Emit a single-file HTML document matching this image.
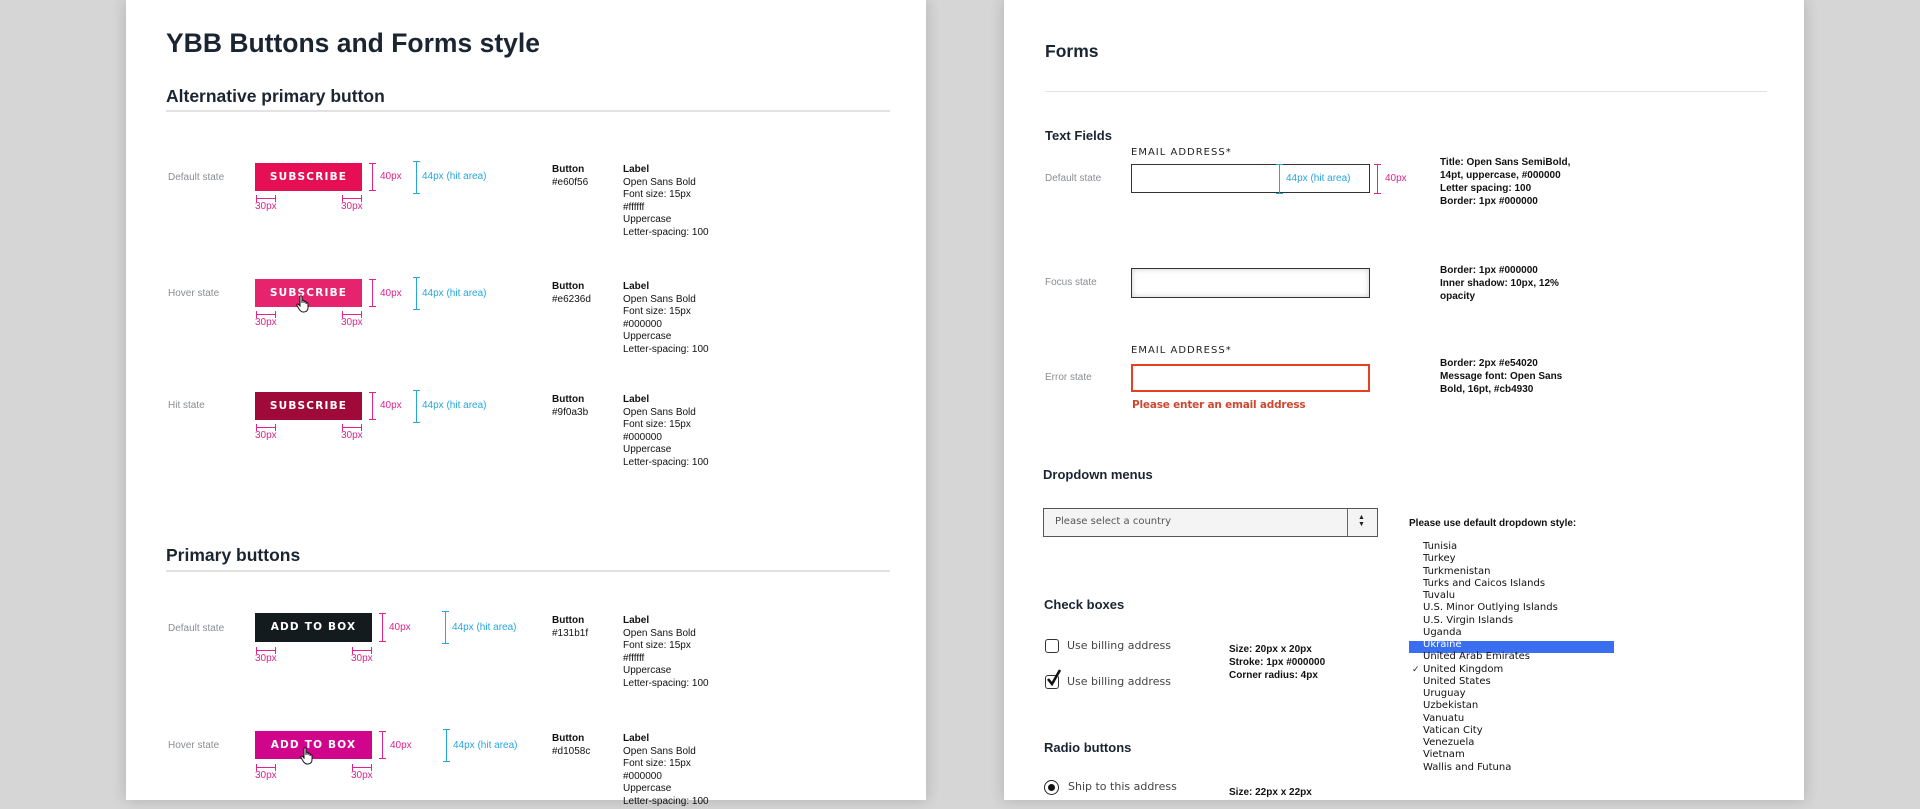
<!DOCTYPE html>
<html><head><meta charset="utf-8"><style>
*{margin:0;padding:0;box-sizing:border-box}
body{width:1920px;height:800px;background:#d6d6d6;position:relative;overflow:hidden;font-family:"Liberation Sans",Arial,sans-serif;color:#1a2530}
.page{position:absolute;top:0;height:800px;background:#fff;box-shadow:0 0 14px rgba(0,0,0,.18)}
.a{position:absolute;white-space:nowrap}
.h1{font-size:26.5px;font-weight:bold;color:#1b2532}
.h2{font-size:17.5px;font-weight:bold;color:#1b2532}
.h3{font-size:13px;font-weight:bold;color:#1b2532}
.hr{position:absolute;height:2px;background:#e2e2e4}
.st{font-size:10px;color:#8a8d92}
.btn{position:absolute;color:#fff;font-weight:bold;font-size:10.5px;letter-spacing:1.2px;text-align:center;font-family:"DejaVu Sans","Liberation Sans",sans-serif}
.pk{color:#e0248a;font-size:10px}
.bl{color:#27a6dd;font-size:10px}
.vp{position:absolute;width:1px;background:#e0248a}
.vp:before,.vp:after{content:"";position:absolute;left:-3px;width:7px;height:1px;background:#e0248a}
.vp:before{top:0}.vp:after{bottom:0}
.vb{position:absolute;width:1px;background:#27a6dd}
.vb:before,.vb:after{content:"";position:absolute;left:-3px;width:7px;height:1px;background:#27a6dd}
.vb:before{top:0}.vb:after{bottom:0}
.hp{position:absolute;height:1px;width:20px;background:#e0248a}
.hp:before,.hp:after{content:"";position:absolute;top:-3px;width:1px;height:7px;background:#e0248a}
.hp:before{left:0}.hp:after{right:0}
.sm{font-size:10px;line-height:12.6px;color:#111}
.nt{font-size:10px;line-height:13px;color:#111;font-weight:bold}
.fld{position:absolute;border:1px solid #333;background:#fff}
.lab{font-size:10px;letter-spacing:1px;color:#222;font-family:"DejaVu Sans","Liberation Sans",sans-serif}
.li{position:absolute;left:1423px;font-size:10px;color:#111;font-family:"DejaVu Sans","Liberation Sans",sans-serif}
.opt{font-size:11px;color:#444;font-family:"DejaVu Sans","Liberation Sans",sans-serif}
</style></head><body>
<div class="page" style="left:126px;width:800px"></div>
<div class="page" style="left:1004px;width:800px"></div>

<div class="a h1" style="left:166px;top:28px">YBB Buttons and Forms style</div>
<div class="a h2" style="left:166px;top:86px">Alternative primary button</div>
<div class="hr" style="left:166px;top:110px;width:724px"></div>

<div class="a st" style="left:168px;top:172px">Default state</div>
<div class="btn" style="left:255px;top:163px;width:107px;height:28px;line-height:28px;background:#e60f56">SUBSCRIBE</div>
<div class="vp" style="left:372px;top:163px;height:28px"></div><div class="a pk" style="left:380px;top:171px">40px</div>
<div class="vb" style="left:416px;top:161px;height:33px"></div><div class="a bl" style="left:422px;top:171px">44px (hit area)</div>
<div class="hp" style="left:256px;top:198px"></div><div class="hp" style="left:342px;top:198px"></div>
<div class="a pk" style="left:255px;top:201px">30px</div><div class="a pk" style="left:341px;top:201px">30px</div>
<div class="a sm" style="left:552px;top:164px"><b>Button</b><br>#e60f56</div>
<div class="a sm" style="left:623px;top:164px"><b>Label</b><br>Open Sans Bold<br>Font size: 15px<br>#ffffff<br>Uppercase<br>Letter-spacing: 100</div>

<div class="a st" style="left:168px;top:288px">Hover state</div>
<div class="btn" style="left:255px;top:279px;width:107px;height:28px;line-height:28px;background:#e6236d">SUBSCRIBE</div>
<svg class="a" style="left:296px;top:295px" width="14" height="18" viewBox="0 0 14 18"><path d="M4 1.5c0-1 2-1 2 0V8V6c0-1 2-1 2 0v2-1c0-1 2-1 2 0v2-.5c0-1 2-1 2 0V13c0 2-1.5 4-4 4H7c-2 0-3-1.5-4-3L1 10.5c-.6-1 .8-2 1.6-1L4 11z" fill="#fff" stroke="#111" stroke-width="1"/></svg>
<div class="vp" style="left:372px;top:279px;height:28px"></div><div class="a pk" style="left:380px;top:288px">40px</div>
<div class="vb" style="left:416px;top:277px;height:33px"></div><div class="a bl" style="left:422px;top:288px">44px (hit area)</div>
<div class="hp" style="left:256px;top:314px"></div><div class="hp" style="left:342px;top:314px"></div>
<div class="a pk" style="left:255px;top:317px">30px</div><div class="a pk" style="left:341px;top:317px">30px</div>
<div class="a sm" style="left:552px;top:281px"><b>Button</b><br>#e6236d</div>
<div class="a sm" style="left:623px;top:281px"><b>Label</b><br>Open Sans Bold<br>Font size: 15px<br>#000000<br>Uppercase<br>Letter-spacing: 100</div>

<div class="a st" style="left:168px;top:400px">Hit state</div>
<div class="btn" style="left:255px;top:392px;width:107px;height:28px;line-height:28px;background:#9f0a3b">SUBSCRIBE</div>
<div class="vp" style="left:372px;top:392px;height:28px"></div><div class="a pk" style="left:380px;top:400px">40px</div>
<div class="vb" style="left:416px;top:390px;height:33px"></div><div class="a bl" style="left:422px;top:400px">44px (hit area)</div>
<div class="hp" style="left:256px;top:427px"></div><div class="hp" style="left:342px;top:427px"></div>
<div class="a pk" style="left:255px;top:430px">30px</div><div class="a pk" style="left:341px;top:430px">30px</div>
<div class="a sm" style="left:552px;top:394px"><b>Button</b><br>#9f0a3b</div>
<div class="a sm" style="left:623px;top:394px"><b>Label</b><br>Open Sans Bold<br>Font size: 15px<br>#000000<br>Uppercase<br>Letter-spacing: 100</div>

<div class="a h2" style="left:166px;top:545px">Primary buttons</div>
<div class="hr" style="left:166px;top:570px;width:724px"></div>

<div class="a st" style="left:168px;top:623px">Default state</div>
<div class="btn" style="left:255px;top:613px;width:117px;height:29px;line-height:29px;background:#131b1f">ADD TO BOX</div>
<div class="vp" style="left:382px;top:613px;height:29px"></div><div class="a pk" style="left:389px;top:622px">40px</div>
<div class="vb" style="left:445px;top:611px;height:33px"></div><div class="a bl" style="left:452px;top:622px">44px (hit area)</div>
<div class="hp" style="left:256px;top:650px"></div><div class="hp" style="left:352px;top:650px"></div>
<div class="a pk" style="left:255px;top:653px">30px</div><div class="a pk" style="left:351px;top:653px">30px</div>
<div class="a sm" style="left:552px;top:615px"><b>Button</b><br>#131b1f</div>
<div class="a sm" style="left:623px;top:615px"><b>Label</b><br>Open Sans Bold<br>Font size: 15px<br>#ffffff<br>Uppercase<br>Letter-spacing: 100</div>

<div class="a st" style="left:168px;top:740px">Hover state</div>
<div class="btn" style="left:255px;top:731px;width:117px;height:28px;line-height:28px;background:#d1058c">ADD TO BOX</div>
<svg class="a" style="left:300px;top:747px" width="14" height="18" viewBox="0 0 14 18"><path d="M4 1.5c0-1 2-1 2 0V8V6c0-1 2-1 2 0v2-1c0-1 2-1 2 0v2-.5c0-1 2-1 2 0V13c0 2-1.5 4-4 4H7c-2 0-3-1.5-4-3L1 10.5c-.6-1 .8-2 1.6-1L4 11z" fill="#fff" stroke="#111" stroke-width="1"/></svg>
<div class="vp" style="left:382px;top:731px;height:28px"></div><div class="a pk" style="left:390px;top:740px">40px</div>
<div class="vb" style="left:446px;top:729px;height:33px"></div><div class="a bl" style="left:453px;top:740px">44px (hit area)</div>
<div class="hp" style="left:256px;top:767px"></div><div class="hp" style="left:352px;top:767px"></div>
<div class="a pk" style="left:255px;top:770px">30px</div><div class="a pk" style="left:351px;top:770px">30px</div>
<div class="a sm" style="left:552px;top:733px"><b>Button</b><br>#d1058c</div>
<div class="a sm" style="left:623px;top:733px"><b>Label</b><br>Open Sans Bold<br>Font size: 15px<br>#000000<br>Uppercase<br>Letter-spacing: 100</div>

<!-- right page -->
<div class="a h2" style="left:1045px;top:41px">Forms</div>
<div class="hr" style="left:1045px;top:91px;width:722px;height:1px"></div>
<div class="a h3" style="left:1045px;top:128px">Text Fields</div>

<div class="a lab" style="left:1131px;top:147px">EMAIL ADDRESS*</div>
<div class="a st" style="left:1045px;top:173px">Default state</div>
<div class="fld" style="left:1131px;top:164px;width:239px;height:29px"></div>
<div class="vb" style="left:1279px;top:164px;height:30px"></div><div class="a bl" style="left:1286px;top:173px">44px (hit area)</div>
<div class="vp" style="left:1377px;top:164px;height:30px"></div><div class="a pk" style="left:1385px;top:173px">40px</div>
<div class="a nt" style="left:1440px;top:156px">Title: Open Sans SemiBold,<br>14pt, uppercase, #000000<br>Letter spacing: 100<br>Border: 1px #000000</div>

<div class="a st" style="left:1045px;top:277px">Focus state</div>
<div class="fld" style="left:1131px;top:268px;width:239px;height:30px;box-shadow:inset 0 0 6px rgba(0,0,0,.2)"></div>
<div class="a nt" style="left:1440px;top:264px">Border: 1px #000000<br>Inner shadow: 10px, 12%<br>opacity</div>

<div class="a lab" style="left:1131px;top:345px">EMAIL ADDRESS*</div>
<div class="a st" style="left:1045px;top:372px">Error state</div>
<div class="fld" style="left:1131px;top:364px;width:239px;height:28px;border:2px solid #e54020"></div>
<div class="a" style="left:1132px;top:399px;font-size:10.5px;font-weight:bold;color:#cb4930;font-family:'DejaVu Sans','Liberation Sans',sans-serif;letter-spacing:-0.2px">Please enter an email address</div>
<div class="a nt" style="left:1440px;top:357px">Border: 2px #e54020<br>Message font: Open Sans<br>Bold, 16pt, #cb4930</div>

<div class="a h3" style="left:1043px;top:467px">Dropdown menus</div>
<div class="fld" style="left:1043px;top:508px;width:335px;height:29px;background:#f4f4f4;border-color:#555"></div>
<div class="a" style="left:1055px;top:516px;font-size:10px;color:#555;font-family:'DejaVu Sans','Liberation Sans',sans-serif">Please select a country</div>
<div style="position:absolute;left:1347px;top:509px;width:1px;height:27px;background:#666"></div>
<div class="a" style="left:1358px;top:514px;font-size:7px;line-height:7px;color:#222">▲<br>▼</div>
<div class="a nt" style="left:1409px;top:517px">Please use default dropdown style:</div>

<div class="li" style="top:541px">Tunisia</div>
<div class="li" style="top:553px">Turkey</div>
<div class="li" style="top:566px">Turkmenistan</div>
<div class="li" style="top:578px">Turks and Caicos Islands</div>
<div class="li" style="top:590px">Tuvalu</div>
<div class="li" style="top:602px">U.S. Minor Outlying Islands</div>
<div class="li" style="top:615px">U.S. Virgin Islands</div>
<div class="li" style="top:627px">Uganda</div>
<div class="a" style="left:1409px;top:641px;width:205px;height:12px;background:#3a6ef0"></div>
<div class="li" style="top:639px;color:#fff">Ukraine</div>
<div class="li" style="top:651px">United Arab Emirates</div>
<div class="a" style="left:1412px;top:664px;font-size:9px">✓</div>
<div class="li" style="top:664px">United Kingdom</div>
<div class="li" style="top:676px">United States</div>
<div class="li" style="top:688px">Uruguay</div>
<div class="li" style="top:700px">Uzbekistan</div>
<div class="li" style="top:713px">Vanuatu</div>
<div class="li" style="top:725px">Vatican City</div>
<div class="li" style="top:737px">Venezuela</div>
<div class="li" style="top:749px">Vietnam</div>
<div class="li" style="top:762px">Wallis and Futuna</div>

<div class="a h3" style="left:1044px;top:597px">Check boxes</div>
<div class="a" style="left:1045px;top:639px;width:14px;height:14px;border:1px solid #333;border-radius:3px"></div>
<div class="a opt" style="left:1067px;top:639px">Use billing address</div>
<div class="a" style="left:1045px;top:675px;width:14px;height:14px;border:1px solid #333;border-radius:3px"></div>
<svg class="a" style="left:1046px;top:668px" width="16" height="20" viewBox="0 0 16 20"><path d="M2 11l4 5L14 2" fill="none" stroke="#111" stroke-width="2.6"/></svg>
<div class="a opt" style="left:1067px;top:675px">Use billing address</div>
<div class="a nt" style="left:1229px;top:643px">Size: 20px x 20px<br>Stroke: 1px #000000<br>Corner radius: 4px</div>

<div class="a h3" style="left:1044px;top:740px">Radio buttons</div>
<div class="a" style="left:1044px;top:780px;width:15px;height:15px;border:1.5px solid #222;border-radius:50%"></div>
<div class="a" style="left:1048px;top:784px;width:7px;height:7px;background:#111;border-radius:50%"></div>
<div class="a opt" style="left:1068px;top:780px">Ship to this address</div>
<div class="a nt" style="left:1229px;top:786px">Size: 22px x 22px</div>
</body></html>
